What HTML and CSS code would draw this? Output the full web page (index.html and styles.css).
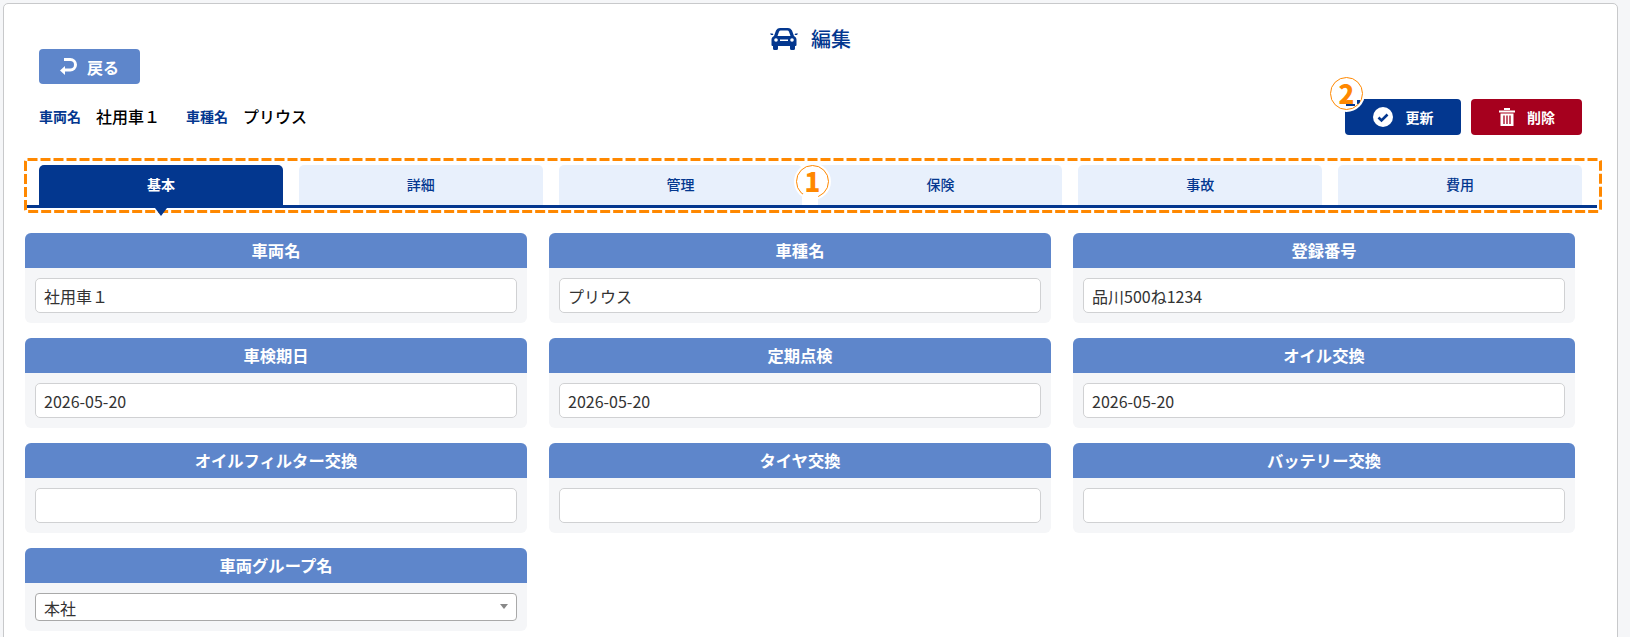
FILE: index.html
```html
<!DOCTYPE html>
<html lang="ja">
<head>
<meta charset="utf-8">
<title>編集</title>
<link rel="stylesheet" href="styles.css">
</head>
<body>
<main class="card">
  <h1 class="title">
    <svg class="car" viewBox="0 0 28 22"><path d="M6 2.500C7 .8 8.500 0 10 0h8c1.500 0 3 .8 4 2.500L24 8c1.500 .8 2.500 2 2.500 3.800V17a1 1 0 0 1-1 1H25v2.500a1.500 1.500 0 0 1-1.500 1.500h-2a1.500 1.500 0 0 1-1.500-1.500V18H8v2.500A1.500 1.500 0 0 1 6.500 22h-2A1.500 1.500 0 0 1 3 20.500V18H2.500a1 1 0 0 1-1-1v-5.200C1.500 10 2.500 8.800 4 8Z" fill="#03378f"/><path d="M7.500 8 9 3.800C9.300 3 9.900 2.600 10.700 2.600h6.600c.8 0 1.400 .4 1.700 1.200L20.500 8Z" fill="#fff"/><circle cx="6" cy="12" r="1.800" fill="#fff"/><circle cx="22" cy="12" r="1.800" fill="#fff"/><rect x="10" y="11.500" width="8" height="1.500" fill="#fff"/><path d="M0 5.500h2.600L3.500 7H1zM28 5.500h-2.600L24.500 7H27z" fill="#03378f"/></svg>
    <span>編集</span>
  </h1>
  <button class="btn back">
    <svg class="back-icon" viewBox="0 0 17 18"><path d="M4 1.500h6.250a5.250 5.250 0 0 1 0 10.500H4" fill="none" stroke="#fff" stroke-width="3"/><path d="M0 12.500 5 8v9z" fill="#fff"/></svg>
    戻る
  </button>
  <div class="meta-row">
    <dl class="meta">
      <dt>車両名</dt><dd>社用車１</dd>
      <dt>車種名</dt><dd>プリウス</dd>
    </dl>
    <div class="actions">
      <button class="btn update">
        <svg class="act-icon" viewBox="0 0 20 20"><circle cx="10" cy="10" r="10" fill="#fff"/><path d="M5.500 10.500 8.500 13.500 14.500 7.500" fill="none" stroke="#03378f" stroke-width="2.600"/></svg>
        更新
      </button>
      <button class="btn remove">
        <svg class="trash-icon" viewBox="0 0 16 18"><path d="M0 2.500h16v2H0zM5 0h6v2H5zM1.500 5.500h13V18h-13z" fill="#fff"/><path d="M5 7.500v8.500M8 7.500v8.500M11 7.500v8.500" stroke="#a6001e" stroke-width="1.300"/></svg>
        削除
      </button>
    </div>
  </div>
  <nav class="tabs">
    <a class="tab active">基本</a>
    <a class="tab">詳細</a>
    <a class="tab">管理</a>
    <a class="tab">保険</a>
    <a class="tab">事故</a>
    <a class="tab">費用</a>
  </nav>
  <section class="grid">
    <div class="field"><h2>車両名</h2><div class="body"><input class="input" value="社用車１"></div></div>
    <div class="field"><h2>車種名</h2><div class="body"><input class="input" value="プリウス"></div></div>
    <div class="field"><h2>登録番号</h2><div class="body"><input class="input" value="品川500ね1234"></div></div>
    <div class="field"><h2>車検期日</h2><div class="body"><input class="input" value="2026-05-20"></div></div>
    <div class="field"><h2>定期点検</h2><div class="body"><input class="input" value="2026-05-20"></div></div>
    <div class="field"><h2>オイル交換</h2><div class="body"><input class="input" value="2026-05-20"></div></div>
    <div class="field"><h2>オイルフィルター交換</h2><div class="body"><input class="input"></div></div>
    <div class="field"><h2>タイヤ交換</h2><div class="body"><input class="input"></div></div>
    <div class="field"><h2>バッテリー交換</h2><div class="body"><input class="input"></div></div>
    <div class="field"><h2>車両グループ名</h2><div class="body"><div class="select">本社<i class="arrow"></i></div></div></div>
  </section>

  <svg class="dash" width="1578" height="56" viewBox="0 0 1578 56"><rect x="1.500" y="1.500" width="1575" height="52" rx="2" fill="none" stroke="#ff8800" stroke-width="3" stroke-dasharray="10 3"/></svg>
  <div class="badge badge-one">1</div>
  <div class="badge badge-two">2</div>
</main>
</body>
</html>
```
FILE: styles.css
```css
* { box-sizing: border-box; }
html, body { margin: 0; height: 637px; overflow: hidden; background: #f5f6f8; }
body { font-family: "Noto Sans CJK JP", "Noto Sans", sans-serif; color: #333; padding: 3px 12px 0 3px; }
.card { position: relative; width: 1615px; height: 660px; background: #fff; border: 1px solid #c8c9cb; border-radius: 5px; padding: 0 20px 0 21px; }
.title { margin: 0; position: absolute; top: 20px; left: 0; right: 0; display: flex; justify-content: center; align-items: center; gap: 13px; font-size: 20px; font-weight: 500; line-height: 30px; color: #03378f; }
.car { width: 28px; height: 22px; }
.btn { display: flex; align-items: center; justify-content: center; border: 0; border-radius: 4px; color: #fff; font: 700 14px/20px "Noto Sans CJK JP", sans-serif; }
.back { width: 101px; height: 35px; margin: 45px 0 0 14px; background: #5e86cb; gap: 10px; font-size: 16px; }
.back-icon { width: 17px; height: 18px; }
.meta-row { display: flex; justify-content: space-between; height: 36px; margin: 15px 15px 0 14px; }
.meta { display: flex; align-items: flex-start; margin: 5px 0 0; line-height: 24px; color: #000; }
.meta dt { font-size: 14px; font-weight: 700; color: #03378f; margin-right: 15px; }
.meta dd { font-size: 16px; font-weight: 500; margin: 0 26px 0 0; }
.actions { display: flex; gap: 10px; }
.update { width: 116px; height: 36px; background: #03378f; gap: 13px; }
.remove { width: 111px; height: 36px; background: #a6001e; gap: 12px; padding-right: 5px; }
.act-icon { width: 20px; height: 20px; }
.trash-icon { width: 16px; height: 18px; }
.tabs { display: flex; gap: 16px; height: 43px; margin: 30px 0 0; padding: 0 15px 0 14px; border-bottom: 3px solid #03378f; width: 1572px; }
.tab { position: relative; flex: 0 0 243.830px; height: 40px; padding-bottom: 2px; display: flex; align-items: center; justify-content: center; background: #e8f0fc; border-radius: 5px 5px 0 0; color: #03378f; font-size: 14px; font-weight: 500; }
.tab.active { background: #03378f; color: #fff; font-weight: 700; }
.tab.active::after { content: ""; position: absolute; z-index: 2; left: 116px; top: 43px; border: 6px solid transparent; border-top: 8px solid #03378f; border-bottom: 0; }
.grid { display: grid; grid-template-columns: repeat(3, 502px); gap: 15px 22px; margin-top: 25px; }
.field { background: #f5f6f8; border-radius: 6px; overflow: hidden; }
.field h2 { margin: 0; height: 35px; background: #5e86cb; color: #fff; font-size: 16.300px; font-weight: 700; line-height: 35px; text-align: center; }
.body { padding: 10px; }
.input { display: block; width: 100%; height: 35px; padding: 0 8px; background: #fff; border: 1px solid #d0d1d3; border-radius: 5px; font: 400 16px "Noto Sans CJK JP", sans-serif; color: #333; outline: 0; }
.select { position: relative; height: 28px; padding: 0 8px; background: #fff; border: 1px solid #a9a9a9; border-radius: 4px; font-size: 16px; line-height: 28px; }
.arrow { position: absolute; right: 8px; top: 10px; border: 4px solid transparent; border-top: 5px solid #888; border-bottom: 0; }
.dash { position: absolute; z-index: 1; left: 20px; top: 154px; }
.badge { position: absolute; z-index: 3; width: 33px; height: 33px; border: 1.500px solid #ff8800; border-radius: 50%; background: #fff; box-shadow: 0 0 0 2px #fff; color: #ff8800; font: 900 26px/29px "Noto Sans CJK JP", sans-serif; text-align: center; }
.badge-one { left: 792px; top: 161px; }
.badge-one::after { content: ""; position: absolute; z-index: -1; left: 6px; top: 28px; width: 15px; height: 9px; background: #fff; }
.badge-two { left: 1326px; top: 73px; }
.badge-two::after { content: ""; position: absolute; left: 15px; top: 26px; width: 9px; height: 2px; background: #03378f; }
.badge-two::before { content: ""; position: absolute; left: 26px; top: 22px; width: 3px; height: 4px; background: #03378f; border-radius: 0 0 3px 0; }
```
